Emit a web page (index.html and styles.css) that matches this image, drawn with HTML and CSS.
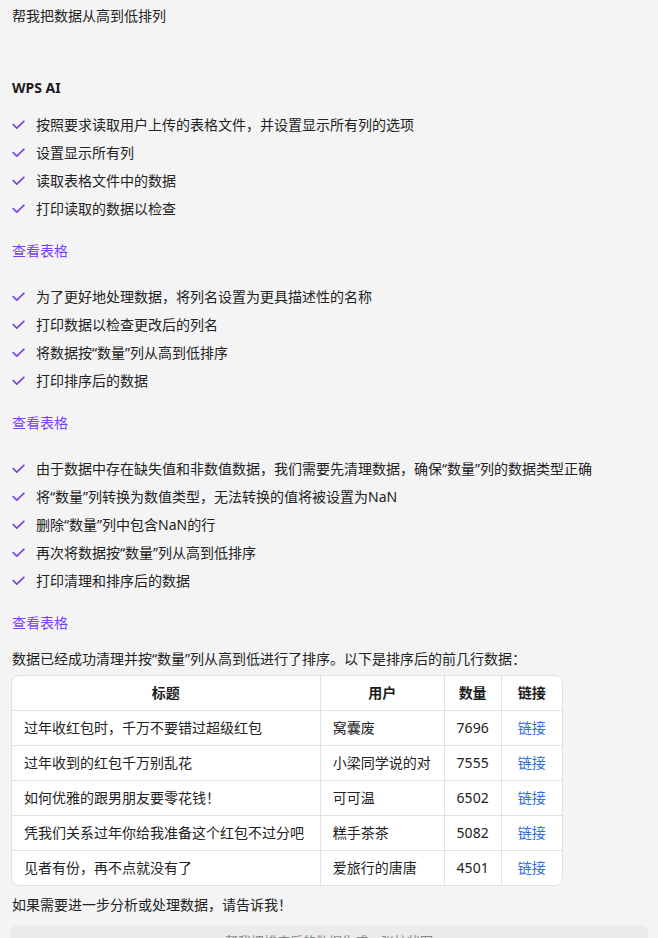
FILE: index.html
```html
<!DOCTYPE html>
<html lang="zh">
<head>
<meta charset="utf-8">
<link rel="stylesheet" href="styles.css">
</head>
<body>
<div class="page">
  <p class="query">帮我把数据从高到低排列</p>
  <h2 class="ai-title">WPS AI</h2>

  <ul class="steps">
    <li><svg class="chk" viewBox="0 0 13 10"><path d="M1.2 4.6 L4.8 8.2 L11.8 1.4"/></svg>按照要求读取用户上传的表格文件，并设置显示所有列的选项</li>
    <li><svg class="chk" viewBox="0 0 13 10"><path d="M1.2 4.6 L4.8 8.2 L11.8 1.4"/></svg>设置显示所有列</li>
    <li><svg class="chk" viewBox="0 0 13 10"><path d="M1.2 4.6 L4.8 8.2 L11.8 1.4"/></svg>读取表格文件中的数据</li>
    <li><svg class="chk" viewBox="0 0 13 10"><path d="M1.2 4.6 L4.8 8.2 L11.8 1.4"/></svg>打印读取的数据以检查</li>
  </ul>
  <a class="view-link">查看表格</a>

  <ul class="steps">
    <li><svg class="chk" viewBox="0 0 13 10"><path d="M1.2 4.6 L4.8 8.2 L11.8 1.4"/></svg>为了更好地处理数据，将列名设置为更具描述性的名称</li>
    <li><svg class="chk" viewBox="0 0 13 10"><path d="M1.2 4.6 L4.8 8.2 L11.8 1.4"/></svg>打印数据以检查更改后的列名</li>
    <li><svg class="chk" viewBox="0 0 13 10"><path d="M1.2 4.6 L4.8 8.2 L11.8 1.4"/></svg>将数据按“数量”列从高到低排序</li>
    <li><svg class="chk" viewBox="0 0 13 10"><path d="M1.2 4.6 L4.8 8.2 L11.8 1.4"/></svg>打印排序后的数据</li>
  </ul>
  <a class="view-link">查看表格</a>

  <ul class="steps">
    <li><svg class="chk" viewBox="0 0 13 10"><path d="M1.2 4.6 L4.8 8.2 L11.8 1.4"/></svg>由于数据中存在缺失值和非数值数据，我们需要先清理数据，确保“数量”列的数据类型正确</li>
    <li><svg class="chk" viewBox="0 0 13 10"><path d="M1.2 4.6 L4.8 8.2 L11.8 1.4"/></svg>将“数量”列转换为数值类型，无法转换的值将被设置为NaN</li>
    <li><svg class="chk" viewBox="0 0 13 10"><path d="M1.2 4.6 L4.8 8.2 L11.8 1.4"/></svg>删除“数量”列中包含NaN的行</li>
    <li><svg class="chk" viewBox="0 0 13 10"><path d="M1.2 4.6 L4.8 8.2 L11.8 1.4"/></svg>再次将数据按“数量”列从高到低排序</li>
    <li><svg class="chk" viewBox="0 0 13 10"><path d="M1.2 4.6 L4.8 8.2 L11.8 1.4"/></svg>打印清理和排序后的数据</li>
  </ul>
  <a class="view-link">查看表格</a>

  <p class="summary">数据已经成功清理并按“数量”列从高到低进行了排序。以下是排序后的前几行数据：</p>

  <table class="data">
    <thead>
      <tr><th class="c-title">标题</th><th class="c-user">用户</th><th class="c-num">数量</th><th class="c-link">链接</th></tr>
    </thead>
    <tbody>
      <tr><td class="c-title">过年收红包时，千万不要错过超级红包</td><td class="c-user">窝囊废</td><td class="c-num">7696</td><td class="c-link"><a>链接</a></td></tr>
      <tr><td class="c-title">过年收到的红包千万别乱花</td><td class="c-user">小梁同学说的对</td><td class="c-num">7555</td><td class="c-link"><a>链接</a></td></tr>
      <tr><td class="c-title">如何优雅的跟男朋友要零花钱！</td><td class="c-user">可可温</td><td class="c-num">6502</td><td class="c-link"><a>链接</a></td></tr>
      <tr><td class="c-title">凭我们关系过年你给我准备这个红包不过分吧</td><td class="c-user">糕手茶茶</td><td class="c-num">5082</td><td class="c-link"><a>链接</a></td></tr>
      <tr><td class="c-title">见者有份，再不点就没有了</td><td class="c-user">爱旅行的唐唐</td><td class="c-num">4501</td><td class="c-link"><a>链接</a></td></tr>
    </tbody>
  </table>

  <p class="closing">如果需要进一步分析或处理数据，请告诉我！</p>

  <div class="suggest">帮我把排序后的数据生成一张柱状图</div>
</div>
</body>
</html>
```

FILE: styles.css
```css
html, body {
  margin: 0;
  padding: 0;
  background: #f4f4f4;
  overflow: hidden;
}
body {
  font-family: "Noto Sans", "Noto Sans CJK SC", sans-serif;
  font-size: 14px;
  color: #222;
}
.page {
  padding: 5px 10px 0 10px;
  display: flex;
  flex-direction: column;
  align-items: flex-start;
}
p, h2, ul { margin: 0; }
.query {
  line-height: 22px;
  padding-left: 2px;
}
.ai-title {
  margin-top: 50px;
  margin-bottom: 1px;
  font-size: 14px;
  font-weight: 700;
  line-height: 22px;
  padding-left: 2px;
  color: #1c1c1c;
}
.steps {
  list-style: none;
  padding: 0 0 0 2px;
  margin-top: 11px;
}
.steps li {
  display: flex;
  align-items: center;
  height: 28px;
  line-height: 28px;
  color: #222;
}
.chk {
  width: 13px;
  height: 10px;
  margin-right: 11px;
  flex: none;
}
.chk path {
  fill: none;
  stroke: #7b45e0;
  stroke-width: 1.7;
  stroke-linecap: round;
  stroke-linejoin: round;
}
.view-link {
  display: block;
  margin-top: 17px;
  margin-bottom: 10px;
  padding-left: 2px;
  line-height: 22px;
  color: #7a3ff0;
  cursor: pointer;
}
.summary {
  margin-top: 4px;
  line-height: 22px;
  padding-left: 2px;
}
.data {
  margin-top: 5px;
  margin-left: 1px;
  border-collapse: separate;
  border-spacing: 0;
  background: #fff;
  border: 1px solid #e1e1e1;
  border-radius: 8px;
  width: 552px;
}
.data th, .data td {
  height: 34px;
  padding: 0 12px;
  border-right: 1px solid #e1e1e1;
  border-bottom: 1px solid #e1e1e1;
  line-height: 20px;
  white-space: nowrap;
}
.data tbody tr:last-child td { border-bottom: none; }
.data th:last-child, .data td:last-child { border-right: none; }
.data th {
  font-weight: 700;
  text-align: center;
  color: #1c1c1c;
}
.data .c-title { width: 284px; }
.data td.c-title { text-align: left; }
.data .c-user { width: 99px; }
.data td.c-user { text-align: left; }
.data .c-num { width: 31px; }
.data td.c-num { text-align: right; }
.data .c-link { width: 37px; text-align: center; }
.data td a { color: #2f6fdb; cursor: pointer; }
.closing {
  margin-top: 8px;
  line-height: 22px;
  padding-left: 2px;
}
.suggest {
  margin-top: 9px;
  align-self: stretch;
  height: 40px;
  background: #ebebeb;
  border-radius: 8px;
  text-align: center;
  line-height: 20px;
  padding-top: 6px;
  color: #888;
  font-size: 13px;
}
```
